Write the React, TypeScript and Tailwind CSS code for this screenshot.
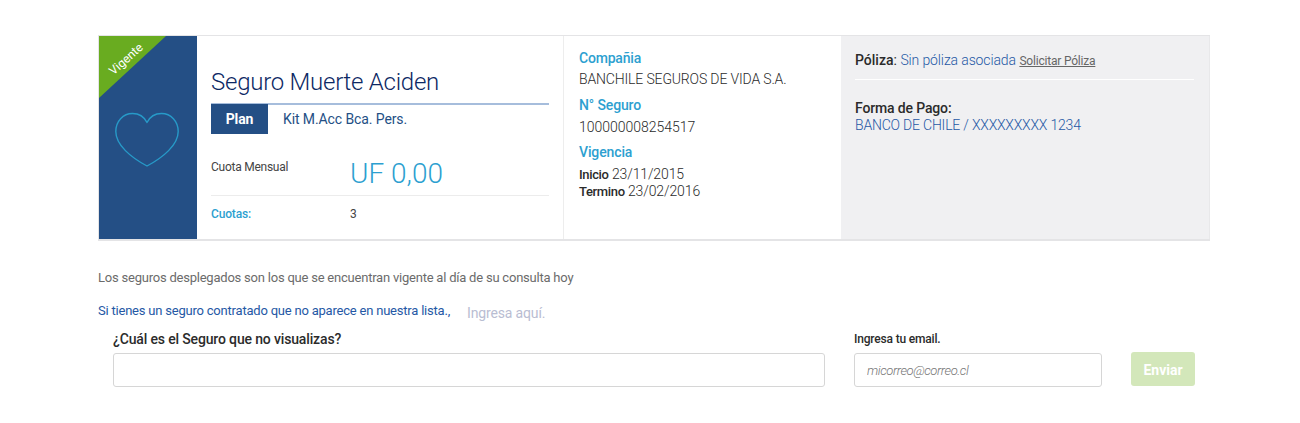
function PolicyBadge() {
  return (
    <div className="relative h-[203px] w-[98px] shrink-0 overflow-hidden bg-[#244f85]">
      <svg className="absolute left-0 top-0" width="98" height="203" viewBox="0 0 98 203" fill="none">
        <path d="M0 0H67L0 62Z" fill="#69ac20" />
        <path
          d="M48 86.500C45 80.500 40 77.500 33.500 77.500C24 77.500 16.800 85.500 16.800 95.500C16.800 109 32 121.500 48 130C64 121.500 79.200 109 79.200 95.500C79.200 85.500 72 77.500 62.500 77.500C56 77.500 51 80.500 48 86.500Z"
          stroke="#279ac8"
          strokeWidth="1.4"
          strokeLinejoin="round"
        />
      </svg>
      <span className="absolute left-[6px] top-[15px] w-[42px] -rotate-42 text-center text-[12px] leading-4 text-white">
        Vigente
      </span>
    </div>
  );
}

function Summary() {
  return (
    <div className="w-[367px] shrink-0 border-r border-[#ededed] pl-[14px] pr-[14px] pt-[30px]">
      <h1 className="h-[37px] whitespace-nowrap text-[24px] font-light leading-8 tracking-[-0.25px] text-[#0c2864]">
        Seguro Muerte Aciden
      </h1>
      <div className="h-[31px] border-t-2 border-t-[#a6bddc]">
        <div className="-mt-px flex h-[30px] text-[14px] leading-[30px]">
          <span className="w-[57px] bg-[#244f85] text-center font-bold tracking-[-0.1px] text-white">Plan</span>
          <span className="pl-[15px] tracking-[-0.1px] text-[#244f85]">Kit M.Acc Bca. Pers.</span>
        </div>
      </div>
      <div className="flex h-[62px] border-b border-b-[#ececec] pt-[24px]">
        <span className="w-[139px] pt-[1px] text-[12px] leading-4 tracking-[-0.25px] text-[#444]">Cuota Mensual</span>
        <span className="text-[28px] font-light leading-[32px] text-[#2d9fd0]">UF 0,00</span>
      </div>
      <div className="flex pt-[10px] text-[12px] leading-4">
        <span className="w-[139px] font-medium tracking-[-0.15px] text-[#2d9fd0]">Cuotas:</span>
        <span className="text-[#444]">3</span>
      </div>
    </div>
  );
}

function Company() {
  return (
    <div className="w-[277px] shrink-0 whitespace-nowrap pl-[15px] pt-[12px] text-[14px] tracking-[-0.12px] text-[#2b2b2b]">
      <div className="h-[21px] font-medium leading-5 tracking-[-0.2px] text-[#2d9fd0]">Compañia</div>
      <div className="h-[26px] font-light leading-5 tracking-[-0.15px]">BANCHILE SEGUROS DE VIDA S.A.</div>
      <div className="h-[22px] font-medium leading-5 text-[#2d9fd0]">N° Seguro</div>
      <div className="h-[25px] font-light leading-5 tracking-[-0.02px]">100000008254517</div>
      <div className="h-[22px] font-medium leading-5 text-[#2d9fd0]">Vigencia</div>
      <div className="h-[17px] font-light leading-5">
        <b className="text-[13px] font-medium tracking-[-0.35px]">Inicio</b> 23/11/2015
      </div>
      <div className="font-light leading-5">
        <b className="text-[13px] font-medium tracking-[-0.35px]">Termino</b> 23/02/2016
      </div>
    </div>
  );
}

function Payment() {
  return (
    <div className="grow border-r border-[#e8e8ea] bg-[#f0f0f2] pl-[14px] pr-[15px] pt-[14px] text-[14px] text-[#2b2b2b]">
      <div className="h-[30px] whitespace-nowrap border-b border-b-white leading-5">
        <span className="font-medium">Póliza</span>:{" "}
        <span className="font-light tracking-[-0.12px] text-[#2558a5]">Sin póliza asociada</span>{" "}
        <a href="#" className="text-[12px] tracking-[-0.2px] text-[#666] underline">Solicitar Póliza</a>
      </div>
      <div className="mt-[18px] h-[17px] font-medium leading-5 tracking-[-0.15px]">Forma de Pago:</div>
      <div className="font-light leading-5 tracking-[-0.2px] text-[#2558a5]">BANCO DE CHILE / XXXXXXXXX 1234</div>
    </div>
  );
}

export default function App() {
  return (
    <main className="h-[423px] w-[1300px] overflow-hidden bg-white pl-[98px] pt-[35px] font-['Roboto',sans-serif]">
      <section className="flex h-[206px] w-[1112px] border-b-2 border-l border-t border-b-[#e4e4e6] border-l-[#e4e4e6] border-t-[#e4e4e6]">
        <PolicyBadge />
        <Summary />
        <Company />
        <Payment />
      </section>
      <p className="mt-[27px] text-[13px] leading-5 tracking-[-0.22px] text-[#6b6b6b]">
        Los seguros desplegados son los que se encuentran vigente al día de su consulta hoy
      </p>
      <div className="mt-[13px] flex text-[13px] leading-5 text-[#2558a5]">
        <span className="w-[369px] whitespace-nowrap tracking-[-0.21px]">Si tienes un seguro contratado que no aparece en nuestra lista.,</span>
        <a href="#" className="pt-[2px] text-[14px] tracking-[-0.15px] text-[#b9bdd2]">Ingresa aquí.</a>
      </div>
      <form className="flex pl-[15px]">
        <label className="block w-[712px] pt-[6px] text-[14px] font-medium leading-5 tracking-[-0.15px] text-[#2b2b2b]">
          ¿Cuál es el Seguro que no visualizas?
          <input className="mt-[4px] block h-[34px] w-full rounded-[3px] border border-[#d6d6d6] bg-white px-3 outline-none" />
        </label>
        <label className="ml-[29px] block w-[248px] pt-[6px] text-[12px] font-medium leading-5 tracking-[-0.18px] text-[#2b2b2b]">
          Ingresa tu email.
          <input
            placeholder="micorreo@correo.cl"
            className="mt-[4px] block h-[34px] w-full rounded-[3px] border border-[#d6d6d6] bg-white px-3 text-[13px] font-light italic tracking-[-0.42px] outline-none placeholder:text-[#777]"
          />
        </label>
        <button type="button" className="ml-[29px] mt-[29px] h-[34px] w-[64px] rounded-[3px] bg-[#d3e7ba] pt-[2px] text-[14px] font-bold text-white">
          Enviar
        </button>
      </form>
    </main>
  );
}
